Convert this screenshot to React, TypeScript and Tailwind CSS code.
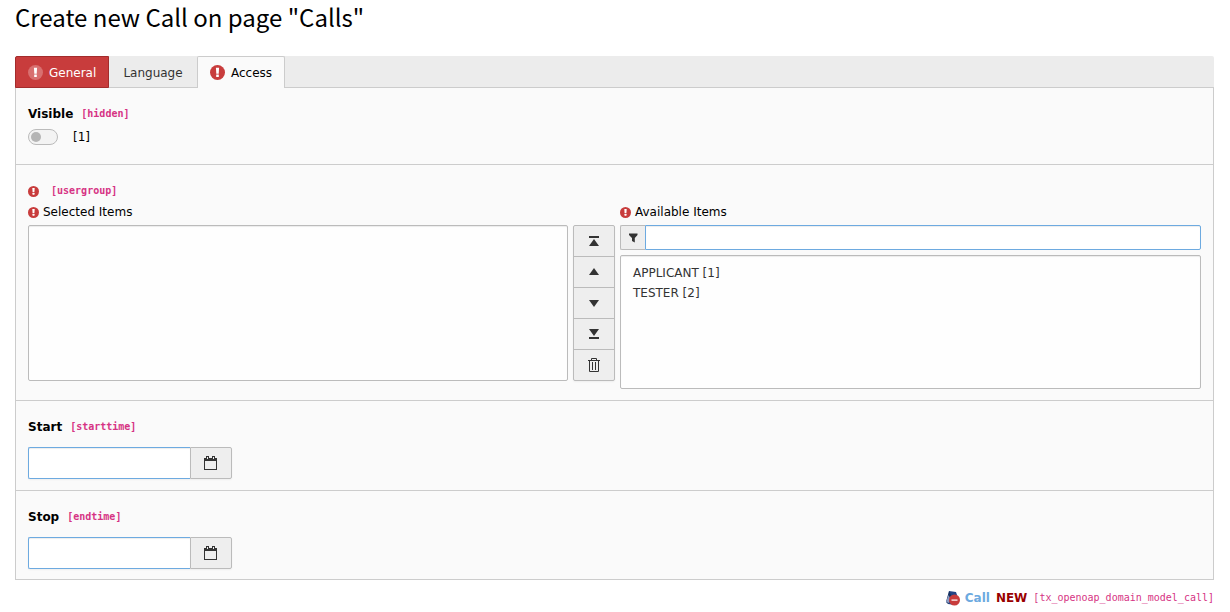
import type { ReactNode } from 'react';

function AlertIcon({ className, tone = '#c83c3c' }: { className: string; tone?: string }) {
  return (
    <svg viewBox="0 0 16 16" className={className} aria-hidden="true">
      <circle cx="8" cy="8" r="8" fill={tone} />
      <path d="M6.300 3h3.400l-.4 6.200H6.700z" fill="#fff" />
      <rect x="6.600" y="10.200" width="2.800" height="2.500" rx=".3" fill="#fff" />
    </svg>
  );
}

function CalendarIcon() {
  return (
    <svg viewBox="0 0 16 16" className="size-4" fill="#333" aria-hidden="true">
      <path fillRule="evenodd" d="M1 3h2V1h3v2h3V1h3v2h2v12H1zM2 6v8h11V6zM4 2v2h1V2zM10 2v2h1V2z" />
    </svg>
  );
}

const moves = [
  { label: 'Move to top', d: 'M3 3h10v2H3zM8 6l5 7H3z' },
  { label: 'Move up', d: 'M8 4l5 7H3z' },
  { label: 'Move down', d: 'M8 12L3 5h10z' },
  { label: 'Move to bottom', d: 'M3 11h10v2H3zM8 10L3 3h10z' },
  {
    label: 'Remove selected',
    d: 'M5 2a1 1 0 0 1 1-1h4a1 1 0 0 1 1 1v1h3v1h-1v10a1 1 0 0 1-1 1H4a1 1 0 0 1-1-1V4H2V3h3zM6 2v1h4V2zM4 4v10h8V4zM6 5h1v8H6zM9 5h1v8H9z',
  },
];

function Code({ children }: { children: ReactNode }) {
  return (
    <code className="font-['DejaVu_Sans_Mono',monospace] text-[10px] text-[#d63384]">[{children}]</code>
  );
}

function Section({ children }: { children: ReactNode }) {
  return (
    <section className="border-b border-[#ccc] px-3 pt-[18px] pb-[11px] last:border-b-0 last:pb-2.5">
      {children}
    </section>
  );
}

function DateField({ id, label, name }: { id: string; label: string; name: string }) {
  return (
    <>
      <label htmlFor={id} className="flex h-4 items-center gap-2 font-bold text-black">
        {label}
        <Code>{name}</Code>
      </label>
      <div className="mt-3 flex w-51 rounded-xs shadow-xs">
        <input
          id={id}
          type="text"
          className="h-8 min-w-0 flex-1 rounded-l-xs border border-r-0 border-[#6daae0] bg-white px-2 shadow-[inset_0_1px_1px_rgba(0,0,0,0.075)] outline-none"
        />
        <button
          type="button"
          aria-label={`Choose ${label} date`}
          className="flex h-8 w-[42px] items-center justify-center rounded-r-xs border border-[#bbb] bg-[#eee]"
        >
          <CalendarIcon />
        </button>
      </div>
    </>
  );
}

export default function App() {
  return (
    <main className="bg-white pr-4 pl-[15px] font-['DejaVu_Sans',Verdana,sans-serif] text-xs text-black">
      <h1 className="h-14 pt-px font-['Noto_Sans_CJK_SC',sans-serif] text-2xl leading-8">
        Create new Call on page "Calls"
      </h1>

      <div role="tablist" className="flex h-8 rounded-t-xs border-b border-[#ccc] bg-[#ececec]">
        <button
          type="button"
          role="tab"
          aria-selected="false"
          className="flex h-8 w-[94px] items-center gap-1.5 rounded-tl-xs border border-[#a32c2c] bg-[#c83c3c] pt-px pl-3 text-white"
        >
          <AlertIcon className="size-[15px] shrink-0" tone="#d87070" />
          General
        </button>
        <button type="button" role="tab" aria-selected="false" className="h-8 w-22 pt-px text-[#333]">
          Language
        </button>
        <button
          type="button"
          role="tab"
          aria-selected="true"
          className="flex h-8 w-22 items-center gap-1.5 rounded-t-xs border border-b-0 border-[#ccc] bg-[#fafafa] pl-3"
        >
          <AlertIcon className="size-[15px] shrink-0" />
          Access
        </button>
      </div>

      <div className="border border-t-0 border-[#ccc] bg-[#fafafa]">
        <Section>
          <div className="pb-2">
            <label htmlFor="visible" className="flex h-4 items-center gap-2 font-bold">
              Visible
              <Code>hidden</Code>
            </label>
            <div className="mt-1.5 flex h-[17px] items-center gap-[15px]">
              <input
                id="visible"
                type="checkbox"
                className="flex h-4 w-[30px] appearance-none items-center rounded-full border border-[#bbb] bg-[#f3f3f3] px-0.5 before:size-2.5 before:rounded-full before:bg-[#b5b5b5] checked:justify-end"
              />
              <label htmlFor="visible">[1]</label>
            </div>
          </div>
        </Section>

        <Section>
          <div className="flex h-4 items-center gap-3 font-bold">
            <AlertIcon className="size-[11px]" />
            <Code>usergroup</Code>
          </div>
          <div className="mt-[5px] grid grid-cols-[587fr_581fr] gap-[5px]">
            <div>
              <label htmlFor="selected" className="flex h-4 items-center gap-1">
                <AlertIcon className="size-[11px]" />
                Selected Items
              </label>
              <div className="mt-[5px] flex h-[156px] gap-[5px]">
                <select
                  id="selected"
                  multiple
                  className="min-w-0 flex-1 rounded-xs border border-[#bbb] bg-[#fefefe] shadow-[inset_0_1px_1px_rgba(0,0,0,0.075)]"
                />
                <div className="flex w-[42px] flex-col divide-y divide-[#bbb] rounded-xs border border-[#bbb] bg-[#eee] shadow-xs">
                  {moves.map((m) => (
                    <button
                      key={m.label}
                      type="button"
                      aria-label={m.label}
                      className="flex flex-1 items-center justify-center"
                    >
                      <svg viewBox="0 0 16 16" className="size-4" fill="#333" aria-hidden="true">
                        <path fillRule="evenodd" d={m.d} />
                      </svg>
                    </button>
                  ))}
                </div>
              </div>
            </div>
            <div>
              <label htmlFor="available" className="flex h-4 items-center gap-1">
                <AlertIcon className="size-[11px]" />
                Available Items
              </label>
              <div className="mt-[5px] flex h-[25px]">
                <label
                  htmlFor="filter"
                  aria-label="Filter items"
                  className="flex w-[25px] items-center justify-center rounded-l-xs border border-r-0 border-[#bbb] bg-[#eee]"
                >
                  <svg viewBox="0 0 10 10" className="size-2.5" fill="#333" aria-hidden="true">
                    <path d="M1 .5h8.500V2L6.800 5v4.500L4 8V5L1 2z" />
                  </svg>
                </label>
                <input
                  id="filter"
                  type="text"
                  className="min-w-0 flex-1 rounded-r-xs border border-[#6daae0] bg-white px-2 shadow-[inset_0_1px_1px_rgba(0,0,0,0.075)] outline-none"
                />
              </div>
              <select
                id="available"
                multiple
                className="mt-[5px] block h-[134px] w-full rounded-xs border border-[#bbb] bg-[#fefefe] px-3 py-2.5 text-[#333] shadow-[inset_0_1px_1px_rgba(0,0,0,0.075)]"
              >
                <option className="h-5 p-0 leading-5">APPLICANT [1]</option>
                <option className="h-5 p-0 leading-5">TESTER [2]</option>
              </select>
            </div>
          </div>
        </Section>

        <Section>
          <DateField id="start" label="Start" name="starttime" />
        </Section>
        <Section>
          <DateField id="stop" label="Stop" name="endtime" />
        </Section>
      </div>

      <footer className="flex h-8 items-center justify-end gap-1.5 pt-1">
        <div className="flex items-center gap-1">
          <svg viewBox="0 0 16 16" className="size-4" aria-hidden="true">
            <path d="M4 1l7 1 3 9-4 4-7-1z" fill="#234485" />
            <path d="M4 1L1 12l2 2 4-7z" fill="#16305f" />
            <path d="M3.500 5L1 12l3 1 1-5z" fill="#8a9cc4" />
            <circle cx="9.500" cy="10" r="5.500" fill="#c83c3c" />
            <rect x="6.500" y="9.500" width="6" height="1.200" fill="#fff" />
          </svg>
          <strong className="text-[#6daae0]">Call</strong>
        </div>
        <strong className="text-[#900]">NEW</strong>
        <Code>tx_openoap_domain_model_call</Code>
      </footer>
    </main>
  );
}
